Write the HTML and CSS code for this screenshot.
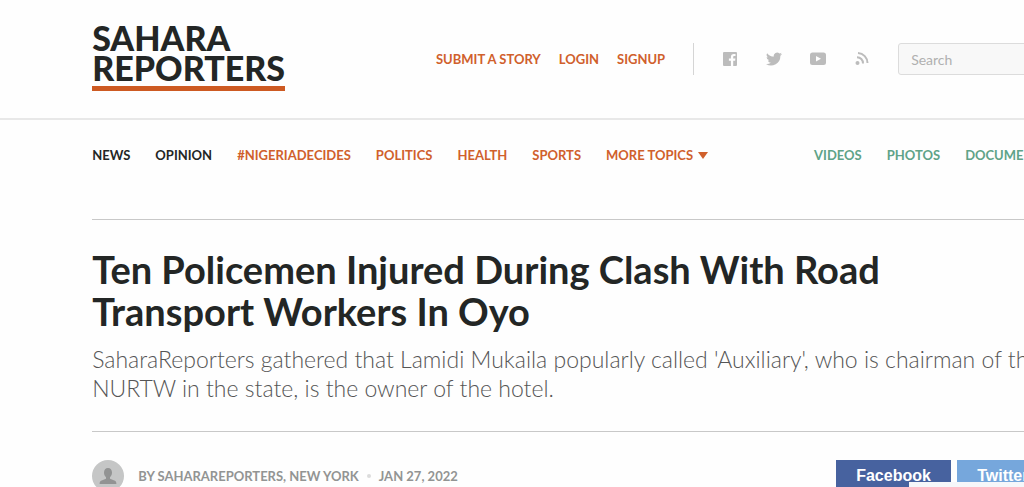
FILE: index.html
```html
<!DOCTYPE html>
<html lang="en">
<head>
    <meta charset="UTF-8">
    <meta name="viewport" content="width=device-width, initial-scale=1.0">
    <title>Ten Policemen Injured During Clash With Road Transport Workers In Oyo | Sahara Reporters</title>
    <link rel="stylesheet" href="styles.css">
</head>
<body>
    <header class="site-header">
        <div class="wrap header-row">
            <a class="logo" href="#">
                <span>SAHARA</span>
                <span>REPORTERS</span>
            </a>
            <nav class="account">
                <a href="#">SUBMIT A STORY</a>
                <a href="#">LOGIN</a>
                <a href="#">SIGNUP</a>
            </nav>
            <div class="social">
                <a href="#" aria-label="Facebook">
                    <svg width="16" height="16" viewBox="0 0 16 16"><path d="M2 1h12a1 1 0 0 1 1 1v12a1 1 0 0 1-1 1h-2.800V9.700h1.900l.3-2.200h-2.200V6.200c0-.7.200-1.100 1.100-1.100h1.200v-2c-.3 0-.9-.1-1.700-.1-1.800 0-2.900 1.100-2.900 2.900v1.600H6.900v2.200h2V15H2a1 1 0 0 1-1-1V2a1 1 0 0 1 1-1z"/></svg>
                </a>
                <a href="#" aria-label="Twitter">
                    <svg width="16" height="16" viewBox="0 0 24 24"><path d="M24 4.600a10 10 0 0 1-2.800.8 5 5 0 0 0 2.100-2.700 10 10 0 0 1-3.100 1.200 4.900 4.900 0 0 0-8.400 4.500A14 14 0 0 1 1.700 3.200a4.900 4.900 0 0 0 1.500 6.500 5 5 0 0 1-2.200-.6 4.900 4.900 0 0 0 3.900 4.900 5 5 0 0 1-2.200.1 4.900 4.900 0 0 0 4.600 3.400A9.900 9.900 0 0 1 0 19.500a14 14 0 0 0 21.500-12.400A10 10 0 0 0 24 4.600z"/></svg>
                </a>
                <a href="#" aria-label="YouTube">
                    <svg width="16" height="16" viewBox="0 0 16 16"><path fill-rule="evenodd" d="M2.500 1.500h11A2.500 2.500 0 0 1 16 4v7.500a2.500 2.500 0 0 1-2.500 2.500h-11A2.500 2.500 0 0 1 0 11.500V4a2.500 2.500 0 0 1 2.500-2.500zM6 5v5.500l5-2.750z"/></svg>
                </a>
                <a href="#" aria-label="RSS">
                    <svg width="16" height="16" viewBox="0 0 16 16"><circle cx="3.500" cy="12" r="2"/><path class="wave" d="M3 6.200a6 6 0 0 1 6 6.300M4 2a10 10 0 0 1 9.500 10"/></svg>
                </a>
            </div>
            <input class="search" type="search" placeholder="Search" aria-label="Search">
        </div>
    </header>

    <main class="wrap">
        <nav class="topics">
            <div class="topics-main">
                <a class="dark" href="#">NEWS</a>
                <a class="dark" href="#">OPINION</a>
                <a href="#">#NIGERIADECIDES</a>
                <a href="#">POLITICS</a>
                <a href="#">HEALTH</a>
                <a href="#">SPORTS</a>
                <button class="more" type="button">MORE TOPICS</button>
            </div>
            <div class="topics-media">
                <a href="#">VIDEOS</a>
                <a href="#">PHOTOS</a>
                <a href="#">DOCUMENTARIES</a>
            </div>
        </nav>

        <article>
            <div class="intro">
                <h1>Ten Policemen Injured During Clash With Road Transport Workers In Oyo</h1>
                <p class="summary">SaharaReporters gathered that Lamidi Mukaila popularly called 'Auxiliary', who is chairman of the NURTW in the state, is the owner of the hotel.</p>
            </div>
            <div class="meta">
                <svg class="avatar" width="32" height="32" viewBox="0 0 32 32"><circle cx="16" cy="16" r="16"/><path d="M16 8c2.500 0 4 1.900 4 4.500 0 2-.8 3.700-2 4.700v1.600l5 2c1 .5 1.400 1.500 1.400 3.200H7.600c0-1.700.4-2.700 1.400-3.200l5-2v-1.600c-1.200-1-2-2.700-2-4.700C12 9.900 13.500 8 16 8z"/></svg>
                <span>BY SAHARAREPORTERS, NEW YORK</span>
                <span class="dot"></span>
                <time datetime="2022-01-27">JAN 27, 2022</time>
                <div class="share">
                    <a class="facebook" href="#">Facebook</a>
                    <a class="twitter" href="#">Twitter</a>
                </div>
            </div>
        </article>
    </main>

    <div class="drawer"></div>
</body>
</html>
```

FILE: styles.css
```css
* {
    margin: 0;
    padding: 0;
    box-sizing: border-box;
}

body {
    min-height: 100vh;
    position: relative;
    overflow: hidden;
    background: #fefefe;
    color: #232625;
    font-family: Lato, "Open Sans", sans-serif;
}

a {
    color: inherit;
    text-decoration: none;
}

.wrap {
    margin-left: 9%;
    min-width: 980px;
}

.site-header {
    border-bottom: 2px solid #e8e8e8;
}

.header-row {
    display: flex;
    align-items: center;
    height: 118px;
}

.logo {
    margin-bottom: 5px;
    padding-bottom: 3px;
    border-bottom: 5px solid #cd5a22;
    font-size: 34px;
    font-weight: 900;
    line-height: 30px;
}

.logo span {
    display: block;
}

.account,
.topics {
    color: #d0602c;
    font-size: 13px;
    font-weight: 700;
    line-height: 16px;
    white-space: nowrap;
}

.account {
    display: flex;
    gap: 18px;
    margin-left: auto;
}

.social {
    display: flex;
    align-items: center;
    gap: 28px;
    height: 32px;
    margin-left: 28px;
    padding: 0 28px;
    border-left: 1px solid #d5d5d5;
}

.social a {
    display: flex;
}

.social svg {
    fill: #bcbcbc;
}

.social .wave {
    fill: none;
    stroke: #bcbcbc;
    stroke-width: 2;
}

.search {
    width: 174px;
    height: 32px;
    padding: 0 12px;
    border: 1px solid #dcdcdc;
    border-radius: 3px;
    background: #f8f8f8;
    font: 14px Lato, sans-serif;
}

.search::placeholder {
    color: #b0b0b0;
}

.topics {
    display: flex;
    gap: 106px;
    padding: 27px 0 56px;
}

.topics-main,
.topics-media {
    display: flex;
    flex-shrink: 0;
    gap: 25px;
}

.topics .dark {
    color: #232625;
}

.topics-media {
    color: #5fa388;
}

.more {
    display: flex;
    align-items: center;
    gap: 5px;
    border: none;
    background: none;
    color: inherit;
    font: inherit;
}

.more::after {
    content: "";
    border: 5px solid transparent;
    border-top: 7px solid #d0602c;
    border-bottom: none;
}

.intro {
    padding: 28px 0;
    border-top: 1px solid #c8c8c8;
    border-bottom: 1px solid #c8c8c8;
}

h1 {
    max-width: 860px;
    font-size: 38px;
    font-weight: 700;
    line-height: 42px;
}

.summary {
    margin-top: 13px;
    color: #555;
    font-size: 23px;
    font-weight: 300;
    line-height: 29px;
}

.meta {
    display: flex;
    align-items: center;
    height: 32px;
    margin-top: 28px;
    color: #929493;
    font-size: 13px;
    font-weight: 700;
    line-height: 16px;
}

.avatar {
    margin-right: 14px;
    fill: #c5c6c6;
}

.avatar path {
    fill: #929393;
}

.dot {
    width: 4px;
    height: 4px;
    margin: 0 8px;
    border-radius: 50%;
    background: #dcdcdc;
}

.share {
    display: flex;
    gap: 6px;
    margin-left: auto;
    font-family: "Liberation Sans", Arial, sans-serif;
    font-size: 16px;
    line-height: 32px;
    color: #fff;
}

.share a {
    width: 115px;
    padding-left: 20px;
}

.facebook {
    background: #47629f;
}

.twitter {
    background: #76a7dc;
}

/* top edge of the panel docked at the bottom right */
.drawer {
    position: absolute;
    z-index: 1;
    right: 0;
    top: calc(100vh - 5px);
    width: 115px;
    height: 5px;
    background: #f6f7fa;
}
```
